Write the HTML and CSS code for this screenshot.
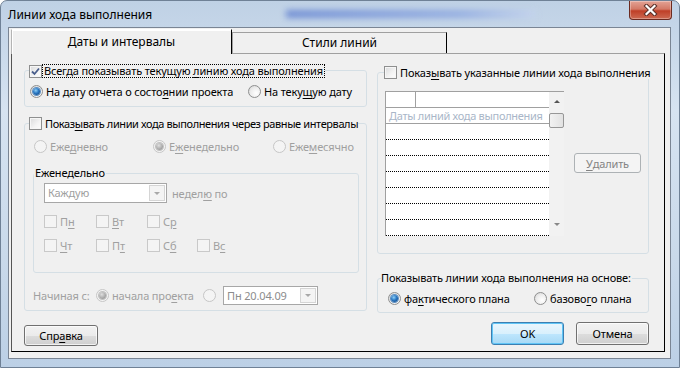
FILE: index.html
```html
<!doctype html>
<html lang="ru">
<head>
	<meta charset="utf-8">
	<title>Линии хода выполнения</title>
	<link rel="stylesheet" href="styles.css">
</head>
<body>
<div class="window">
	<!-- blurred stuff behind the aero glass -->
	<div class="smear"></div>
	<div class="titlebar">
		<span class="title">Линии хода выполнения</span>
		<span class="close">
			<svg width="17" height="12" viewBox="0 0 17 12">
				<path d="M4.5 2 L12.5 10 M12.5 2 L4.5 10" stroke="#5b3129" stroke-width="4.2" stroke-linecap="square"/>
				<path d="M4.5 2 L12.5 10 M12.5 2 L4.5 10" stroke="#fff" stroke-width="2.2" stroke-linecap="square"/>
			</svg>
		</span>
	</div>

	<div class="client">
		<div class="tabs">
			<div class="tab active">Даты и интервалы</div>
			<div class="tab">Стили линий</div>
		</div>

		<div class="page">
			<div class="cols">
				<div class="col col-left">
					<fieldset class="group g-current">
						<legend>
							<span class="chk on"><i><svg width="11" height="11" viewBox="0 0 11 11"><path d="M2 5.5 L4.5 8 L9 2.5" fill="none" stroke="#4a5f8c" stroke-width="1.8"/></svg></i><span class="focus">Всегда показывать текущую <u>л</u>инию хода выполнения</span></span>
						</legend>
						<div class="row r-current">
							<span class="rad on"><i></i>На дату отчета о состо<u>я</u>нии проекта</span>
							<span class="rad"><i></i>На теку<u>щ</u>ую дату</span>
						</div>
					</fieldset>

					<fieldset class="group g-interval">
						<legend>
							<span class="chk tight"><i></i>Показ<u>ы</u>вать линии хода выполнения через равные интервалы</span>
						</legend>
						<div class="row r-period">
							<span class="rad off"><i></i>Еже<u>д</u>невно</span>
							<span class="rad off on"><i></i>Е<u>ж</u>енедельно</span>
							<span class="rad off"><i></i>Еже<u>м</u>есячно</span>
						</div>

						<fieldset class="group g-weekly">
							<legend>Еженедельно</legend>
							<div class="row r-every">
								<span class="combo c-every"><span class="val">Каждую</span><b></b></span>
								<span class="muted">недел<u>ю</u> по</span>
							</div>
							<div class="days">
								<span class="chk off"><i></i>П<u>н</u></span>
								<span class="chk off"><i></i><u>В</u>т</span>
								<span class="chk off"><i></i>С<u>р</u></span>
								<span></span>
								<span class="chk off"><i></i><u>Ч</u>т</span>
								<span class="chk off"><i></i>П<u>т</u></span>
								<span class="chk off"><i></i>С<u>б</u></span>
								<span class="chk off"><i></i>В<u>с</u></span>
							</div>
						</fieldset>

						<div class="row r-start">
							<span class="muted s-label">Начиная с:</span>
							<span class="rad off on s-proj"><i></i>начала про<u>е</u>кта</span>
							<span class="rad off s-date"><i></i></span>
							<span class="combo c-date"><span class="val">Пн 20.04.09</span><b></b></span>
						</div>
					</fieldset>
				</div>

				<div class="col col-right">
					<fieldset class="group g-list">
						<legend>
							<span class="chk"><i></i>Показ<u>ы</u>вать указанные линии хода выполнения</span>
						</legend>
						<div class="row r-list">
							<div class="grid">
								<div class="grid-body">
									<div class="g-head"><span class="g-corner"></span></div>
									<div class="g-caption">Даты линий хода выполнения</div>
									<div class="g-row"></div>
									<div class="g-row"></div>
									<div class="g-row"></div>
									<div class="g-row"></div>
									<div class="g-row"></div>
									<div class="g-row"></div>
									<div class="g-row"></div>
								</div>
								<div class="scroll">
									<span class="arr up"></span>
									<span class="thumb"></span>
									<span class="arr down"></span>
								</div>
							</div>
							<span class="btn disabled b-delete"><u>У</u>далить</span>
						</div>
					</fieldset>

					<fieldset class="group g-basis">
						<legend>Показывать линии хода выполнения на основе:</legend>
						<div class="row r-basis">
							<span class="rad on"><i></i>фа<u>к</u>тического плана</span>
							<span class="rad"><i></i>базово<u>г</u>о плана</span>
						</div>
					</fieldset>
				</div>
			</div>

			<div class="buttons">
				<span class="btn b-help">Спр<u>а</u>вка</span>
				<span class="spacer"></span>
				<span class="btn default b-ok">OK</span>
				<span class="btn b-cancel">Отмена</span>
			</div>
		</div>
	</div>
</div>
</body>
</html>
```

FILE: styles.css
```css
* { box-sizing: border-box; }
body { margin: 0; font-family: "Noto Sans", sans-serif; font-size: 11px; letter-spacing: -0.15px; color: #000; background: #fff; }
u { text-decoration: underline; text-underline-offset: 2px; }

/* window frame */
.window {
  position: relative;
  width: 680px;
  height: 368px;
  display: flex;
  flex-direction: column;
  padding: 0 8px 8px 7px;
  border: 1px solid #6f8196;
  border-radius: 7px 7px 0 0;
  background: linear-gradient(to bottom, #bfd1e5 0, #d6e3f1 30%, #c9d9ea 70%, #bcd0e6 100%);
  overflow: hidden;
}
.smear {
  position: absolute;
  left: 285px;
  top: 9px;
  width: 250px;
  height: 8px;
  background: linear-gradient(to right, #5f7fd0, #8aa5e0 70%, #c5d4ee);
  filter: blur(3px);
  opacity: .8;
}
.titlebar {
  position: relative;
  height: 26px;
  display: flex;
  align-items: flex-start;
}
.title { margin-top: 5px; font-size: 12px; letter-spacing: 0; }
.close {
  margin-left: auto;
  margin-right: -1px;
  width: 43px;
  height: 19px;
  display: flex;
  align-items: center;
  justify-content: center;
  border: 1px solid #6b2a20;
  border-top: none;
  border-radius: 0 0 4px 4px;
  background: linear-gradient(to bottom, #e3a395 0, #d37966 45%, #bf3f27 55%, #cd6a52 100%);
  box-shadow: inset 0 0 0 1px rgba(255,255,255,.3);
}

.client {
  flex: 1;
  background: #f0f0f0;
  border: 1px solid #7a8594;
  padding: 1px 5px 6px 2px;
  display: flex;
  flex-direction: column;
}

/* tabs */
.tabs { display: flex; align-items: flex-end; height: 24px; position: relative; z-index: 1; }
.tab {
  height: 21px;
  width: 215px;
  text-align: center;
  line-height: 19px;
  font-size: 12px;
  letter-spacing: 0;
  border: 1px solid #a0a0a0;
  border-right-color: #000;
  border-bottom: none;
  background: #f0f0f0;
}
.tab.active {
  width: 221px;
  height: 25px;
  line-height: 24px;
  margin-bottom: -1px;
  border-color: #b4b4b4 #000 transparent #b4b4b4;
  border-top-color: #fff;
  box-shadow: inset 1px 1px 0 #fff;
}

.page {
  flex: 1;
  display: flex;
  flex-direction: column;
  border: 1px solid #000;
  border-top-color: #a0a0a0;
  border-left-color: #555;
  padding: 10px 15px 6px 12px;
}
.cols { display: flex; gap: 10px; }
.col-left { width: 345px; }
.col-right { width: 272px; padding-top: 2px; }

/* group boxes */
.group {
  margin: 0;
  min-inline-size: 0;
  border: 1px solid #d5dfe5;
  border-radius: 3px;
}
.group legend { padding: 0; line-height: 13px; height: 13px; white-space: nowrap; }
.g-current { padding: 0 6px 7px 4px; }
.g-interval { margin-top: 10px; padding: 0 7px 5px 8px; }
.g-interval legend { margin-left: -4px; }
.g-weekly { margin-top: 12px; padding: 0 7px 19px 4px; }
.g-weekly legend { height: 14px; line-height: 14px; padding: 0 1px; }
.g-list { padding: 0 7px 17px 7px; }
.g-list legend { margin-left: -1px; }
.g-basis { margin-top: 17px; padding: 0 7px 6px 3px; }
.g-basis legend { height: 14px; line-height: 14px; padding: 0 1px 0 0; }
.tight { letter-spacing: -0.4px; }

.row { display: flex; align-items: center; }
.r-current { margin-top: 6px; height: 16px; padding-left: 1px; }
.r-current .rad:first-child { width: 218px; }
.r-period { margin-top: 8px; height: 16px; padding-left: 1px; }
.r-period .rad:nth-child(1) { width: 119px; }
.r-period .rad:nth-child(2) { width: 120px; }
.r-every { margin-top: 3px; margin-left: 6px; }
.r-every .muted { margin-left: 5px; }
.r-start { margin-top: 13px; height: 19px; }
.s-label { width: 63px; }
.s-proj { width: 107px; }
.s-date { width: 20px; }
.r-list { margin-top: 12px; align-items: flex-start; gap: 10px; }
.r-basis { margin-top: 5px; height: 16px; padding-left: 7px; }
.r-basis .rad:first-child { width: 146px; }

.muted, .off { color: #a0a0a0; }

/* checkbox */
.chk, .rad { display: inline-flex; align-items: center; white-space: nowrap; }
.chk i {
  flex: none;
  width: 13px;
  height: 13px;
  margin-right: 3px;
  border: 1px solid #8e8f8f;
  background: linear-gradient(135deg, #d9dadb 0, #f4f4f4 60%, #fdfdfd 100%);
  box-shadow: inset 0 0 0 1px #f6f6f6;
  display: flex;
  align-items: center;
  justify-content: center;
}
.chk.off i { border-color: #c9c9c9; background: #f4f4f4; box-shadow: none; }
.focus { border: 1px dotted #000; padding: 0 1px; line-height: 12px; }
.g-current .chk i { margin-right: 0; }

/* radio */
.rad i {
  flex: none;
  width: 13px;
  height: 13px;
  margin-right: 3px;
  border-radius: 50%;
  border: 1px solid #8e8f8f;
  background: radial-gradient(circle at 65% 65%, #fff 0, #ececec 55%, #cfcfcf 100%);
  display: flex;
  align-items: center;
  justify-content: center;
}
.rad.on i::after {
  content: "";
  width: 7px;
  height: 7px;
  border-radius: 50%;
  background: radial-gradient(circle at 40% 35%, #8fd0f6 0, #2a78c4 45%, #0b3b73 100%);
  box-shadow: 0 0 0 1px #5d8fc2;
}
.rad.off i { border-color: #c6c6c6; background: #f4f4f4; }
.rad.off.on i::after { background: radial-gradient(circle at 40% 35%, #e0e0e0 0, #a8a8a8 60%, #8c8c8c 100%); box-shadow: 0 0 0 1px #c0c0c0; }

/* combos */
.combo {
  display: flex;
  height: 20px;
  border: 1px solid #a7a7a7;
  background: #fff;
}
.c-every { width: 123px; }
.c-date { width: 95px; height: 19px; }
.combo .val { flex: 1; padding-left: 3px; color: #a0a0a0; line-height: 17px; }
.c-date .val { color: #8c8c8c; }
.combo b {
  width: 16px;
  margin: 1px;
  border: 1px solid #d5d5d5;
  background: #f4f4f4;
  display: flex;
  align-items: center;
  justify-content: center;
}
.combo b::after {
  content: "";
  border: 3px solid transparent;
  border-top: 3px solid #a8a8a8;
  margin-top: 3px;
}

.days {
  margin-top: 10px;
  margin-left: 6px;
  display: grid;
  grid-template-columns: 52px 51px 50px auto;
  row-gap: 8px;
}
.days > span { height: 16px; }

/* list grid */
.grid {
  width: 179px;
  display: flex;
  border: 1px solid #a0a0a0;
  border-right: none;
  border-bottom: none;
  background: #fff;
}
.grid-body { width: 163px; }
.g-head { height: 16px; border-bottom: 1px solid #a0a0a0; }
.g-corner { display: block; width: 30px; height: 15px; border-right: 1px solid #a0a0a0; }
.g-caption {
  height: 16px;
  line-height: 15px;
  padding-left: 3px;
  border-bottom: 1px solid #a0a0a0;
  color: #a9b6c8;
  letter-spacing: -0.3px;
  white-space: nowrap;
  overflow: hidden;
}
.g-row { height: 16px; border-bottom: 1px dotted #000; }
.scroll {
  width: 15px;
  background: #f2f2f2;
  display: flex;
  flex-direction: column;
  align-items: center;
}
.arr { width: 0; height: 0; border: 3px solid transparent; }
.arr.up { border-bottom: 3px solid #555; margin-top: 5px; }
.thumb {
  width: 15px;
  height: 15px;
  margin-top: 10px;
  border: 1px solid #979797;
  border-radius: 2px;
  background: linear-gradient(to right, #f2f2f2, #e2e2e2);
}
.arr.down { border-top: 3px solid #888; margin-top: auto; margin-bottom: 7px; }

/* buttons */
.buttons { margin-top: auto; display: flex; align-items: flex-end; }
.spacer { flex: 1; }
.btn {
  display: inline-flex;
  align-items: center;
  justify-content: center;
  height: 23px;
  width: 73px;
  border: 1px solid #707070;
  border-radius: 3px;
  background: linear-gradient(to bottom, #f2f2f2 0, #ebebeb 50%, #dddddd 51%, #cfcfcf 100%);
  box-shadow: inset 0 0 0 1px rgba(255,255,255,.7);
}
.b-help { width: 74px; height: 21px; margin-bottom: -1px; }
.b-ok { margin-right: 12px; }
.btn.default {
  border-color: #3c7fb1;
  background: linear-gradient(to bottom, #eaf6fd 0, #d9f0fc 50%, #bee6fd 51%, #a7d9f5 100%);
  box-shadow: inset 0 0 0 1px #60c5f6;
}
.btn.disabled {
  width: 68px;
  height: 20px;
  margin-top: 62px;
  color: #838383;
  border-color: #adb2b5;
  background: #f4f4f4;
  box-shadow: none;
}
```
